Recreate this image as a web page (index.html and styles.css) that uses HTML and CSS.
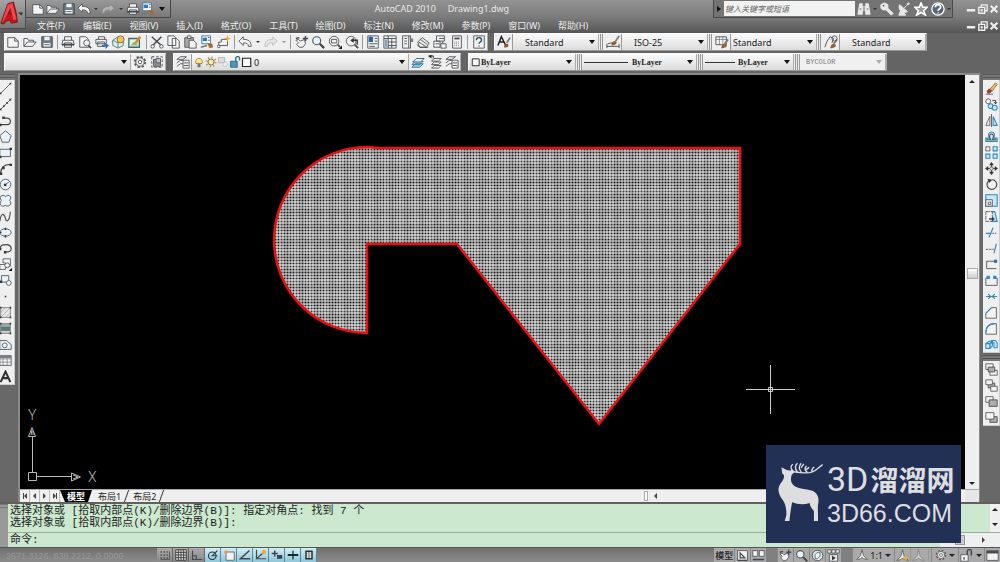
FILE: index.html
```html
<!DOCTYPE html>
<html lang="zh-CN">
<head>
<meta charset="utf-8">
<title>AutoCAD 2010 Drawing1.dwg</title>
<link rel="stylesheet" href="styles.css">
</head>
<body>
<svg class="sprite" aria-hidden="true">
  <symbol id="new" viewBox="0 0 16 16"><path class="p" d="M2 3h8l4 4v7H2z"/><path class="s" d="M10 3v4h4"/></symbol>
  <symbol id="open" viewBox="0 0 16 16"><path class="p" d="M1 13V4h4l1 2h6v2"/><path class="p" d="M1 13l4-5h10l-4 5z"/></symbol>
  <symbol id="save" viewBox="0 0 16 16"><path d="M2 2h12v12H2z" fill="#6d7987" stroke="#3e454e"/><path d="M5 2h6v4H5zM4 9h8v4H4z" fill="#f2f2f2"/><path d="M5 11h6" stroke="#555"/></symbol>
  <symbol id="undo" viewBox="0 0 16 16"><path class="p" d="M1 7l5-5v3c6 0 9 2 9 8h-3c0-3-2-4-6-4v3z"/></symbol>
  <symbol id="redo" viewBox="0 0 16 16"><path d="M15 7l-5-5v3c-6 0-9 2-9 8h3c0-3 2-4 6-4v3z" fill="#ddd" stroke="#888"/></symbol>
  <symbol id="print" viewBox="0 0 16 16"><path class="p" d="M4 6V2h8v4M2 6h12l1 5H1zM4 9h8v5H4z"/><path class="s" d="M1 11h14" stroke-width="2"/></symbol>
  <symbol id="preview" viewBox="0 0 16 16"><path class="p" d="M2 2h7l3 3v9H2z"/><circle cx="10" cy="9" r="3.5" fill="#e7f1f6" stroke="#555"/><path class="s" d="M12 12l3 3" stroke-width="2"/></symbol>
  <symbol id="publish" viewBox="0 0 16 16"><path class="p" d="M4 5V2h7v3M1 5h12v5H1zM3 8h8v5H3z"/><path d="M8 11h4V9l4 3-4 4v-3H8z" fill="#2872b7"/></symbol>
  <symbol id="dwf" viewBox="0 0 16 16"><path d="M2 6l6-4 6 4v6l-6 3-6-3z" fill="#dff0e6" stroke="#477979"/><path d="M2 6l6 3 6-3M8 9v6" fill="none" stroke="#477979"/><circle cx="11" cy="5" r="4" fill="#f4c35a" stroke="#7b6936"/></symbol>
  <symbol id="markup" viewBox="0 0 16 16"><path d="M1 4h12v10H1z" fill="#dff3ef" stroke="#426864" stroke-width="1.5"/><path d="M3 12l3-4 3 2 4 2" fill="#8dbe95"/><path d="M8 10l6-8" stroke="#d48e2c" stroke-width="3"/></symbol>
  <symbol id="cut" viewBox="0 0 16 16"><path class="s" d="M2 2l11 10M13 2L3 12" stroke-width="1.7"/><circle class="p" cx="3" cy="13" r="2"/><circle class="p" cx="13" cy="13" r="2"/></symbol>
  <symbol id="copy" viewBox="0 0 16 16"><path class="p" d="M1 1h7l2 2v9H1zM6 4h5l3 3v8H6z"/></symbol>
  <symbol id="paste" viewBox="0 0 16 16"><path d="M2 3h10v11H2z" fill="#aaa" stroke="#555"/><path class="p" d="M5 1h4v3H5zM7 6h5l3 3v6H7z"/></symbol>
  <symbol id="match" viewBox="0 0 16 16"><path d="M2 1h10v9H2z" fill="#f8fbff" stroke="#4471a0"/><path d="M3 3h5v4H3z" fill="#347ab8"/><path d="M9 3h2M9 6h2" stroke="#456"/><path d="M8 9l6 1 1 4-4 1z" fill="#a86735"/><path d="M1 14l7-2" stroke="#777" stroke-width="2"/></symbol>
  <symbol id="block" viewBox="0 0 16 16"><path class="p" d="M5 5h7v7H2V8h3z"/><circle class="p" cx="2" cy="13" r="1.5"/><path d="M12 0l1 3 3 1-3 1-1 3-1-3-3-1 3-1z" fill="#efaa35"/></symbol>
  <symbol id="pan" viewBox="0 0 16 16"><path class="p" d="M1 6l3-1 2 2 5-2 1 5-3 4H5l-3-3 2-2z"/><path class="s" d="M1 4l4-1M12 1v6M9 4h6" stroke-width="1.6"/></symbol>
  <symbol id="zoom" viewBox="0 0 16 16"><circle cx="6.500" cy="6.500" r="4.500" fill="#e5f4ff" stroke="#555" stroke-width="1.300"/><path d="M10 10l5 5" stroke="#444" stroke-width="2.500"/></symbol>
  <symbol id="zoomwin" viewBox="0 0 16 16"><circle class="p" cx="7" cy="7" r="5.500"/><path class="p" d="M4 5h6v4H4z"/><path class="s" d="M11 11l3 3" stroke-width="2"/><path d="M12 16h4v-4z" fill="#222"/></symbol>
  <symbol id="zoomprev" viewBox="0 0 16 16"><circle class="p" cx="7" cy="7" r="5.500"/><path class="s" d="M11 11l4 4" stroke-width="2"/><path d="M9 6h5v5" fill="none" stroke="#333" stroke-width="1.500"/><path d="M6 6l4-3v6z" fill="#333"/></symbol>
  <symbol id="props" viewBox="0 0 16 16"><path class="p" d="M2 1h12v14H2z"/><path d="M3 2h5v6H3z" fill="#2b62a0"/><path class="s" d="M10 4h3M10 7h3M4 10h9M4 13h6"/></symbol>
  <symbol id="dcenter" viewBox="0 0 16 16"><path class="p" d="M1 1h14v14H1z"/><path class="s" d="M1 4h14M6 1v14M10 4v11M6 8h9M6 12h9"/><path d="M2 5h3v9H2z" fill="#81a2bd"/></symbol>
  <symbol id="palette" viewBox="0 0 16 16"><path class="p" d="M3 1h9v14H3z"/><path class="s" d="M5 4h3M5 7h3M5 10h3M10 1v14"/><path d="M12 4h3v4h-3z" fill="#777"/></symbol>
  <symbol id="sheets" viewBox="0 0 16 16"><path class="p" d="M2 8l5-5 8 6-3 5H4z"/><path class="s" d="M1 11l4 3h9M5 5l8 6M3 8l8 5"/></symbol>
  <symbol id="marks" viewBox="0 0 16 16"><path class="p" d="M4 1h9v6H4zM1 7h7v7H1zM9 10h6v5H9z"/><path class="s" d="M3 10h4M7 4h6M11 7v3"/></symbol>
  <symbol id="calc" viewBox="0 0 16 16"><path class="p" d="M3 1h10v14H3z"/><path class="s" d="M5 4h6" stroke-width="2"/><path d="M5 8h6M5 10h6M5 12h6" stroke="#777" stroke-dasharray="1 1"/></symbol>
  <symbol id="help" viewBox="0 0 16 16"><path class="p" d="M2 1h12v14H2z"/><path d="M5 6c0-4 6-4 6 0 0 2-3 2-3 4M8 12v1" fill="none" stroke="#245" stroke-width="1.500"/></symbol>
  <symbol id="tstyle" viewBox="0 0 16 16"><path d="M1 12L5 2l5 10M3 8h5" fill="none" stroke="#222" stroke-width="1.800"/><path d="M15 3l-4 6" stroke="#777" stroke-width="2"/><path d="M8 14c0-4 4-5 5-3s-2 4-5 3z" fill="#8b5a31"/></symbol>
  <symbol id="dstyle" viewBox="0 0 16 16"><path class="s" d="M1 10v5M15 10v5M1 13h14M2 10l9-2"/><path d="M15 1l-4 6" stroke="#777" stroke-width="2"/><path d="M6 12c1-6 5-6 6-4s-2 4-6 4z" fill="#975f33"/></symbol>
  <symbol id="tbstyle" viewBox="0 0 16 16"><path class="p" d="M1 2h12v9H1z"/><path class="s" d="M1 5h12M5 2v9M9 2v9" opacity=".6"/><path d="M15 5l-4 5" stroke="#777" stroke-width="2"/><path d="M7 15c1-5 4-6 6-4s-2 4-6 4z" fill="#975f33"/></symbol>
  <symbol id="mlstyle" viewBox="0 0 16 16"><path class="s" d="M1 14l2-6 4-6 4 2-2 5"/><path d="M15 5l-4 5" stroke="#777" stroke-width="2"/><path d="M7 15c1-5 4-6 6-4s-2 4-6 4z" fill="#975f33"/><circle cx="12" cy="4" r="3" fill="none" stroke="#555"/></symbol>
  <symbol id="gear" viewBox="0 0 16 16"><circle cx="8" cy="8" r="6" fill="#ddd" stroke="#555" stroke-width="2" stroke-dasharray="2.600 2.100"/><circle cx="8" cy="8" r="4.800" fill="#eee" stroke="#555"/><circle cx="8" cy="8" r="2" fill="#fff" stroke="#555"/></symbol>
  <symbol id="frame" viewBox="0 0 16 16"><path class="s" d="M2 2h12v12H2z" stroke-dasharray="3 2"/><path d="M4 5h8v8H4z" fill="#8a9098" stroke="#555"/><path d="M7 4h5v5H7z" fill="#bcc2c8" stroke="#555"/></symbol>
  <symbol id="layers" viewBox="0 0 16 16"><path class="p" d="M1 5l4-3h7l-4 3zM1 9l4-3h4M1 13l4-3h3"/><path class="p" d="M8 6h7v9H8z"/><path class="s" d="M9 9h5M9 12h5"/></symbol>
  <symbol id="bluelayers" viewBox="0 0 16 16"><path d="M1 14l4-4h9l-4 4zM1 11l4-4h9l-4 4z" fill="#9bd1ed" stroke="#34759b"/><path d="M2 8l4-4h9l-4 4z" fill="#dff1fa" stroke="#34556b"/></symbol>
  <symbol id="layerprev" viewBox="0 0 16 16"><path class="p" d="M7 4h8l-3 3H4zM7 8h8l-3 3H4zM7 12h8l-3 3H4z"/><path d="M1 1h5v3" fill="none" stroke="#222"/><path d="M0 1l4-1v4z" fill="#222"/></symbol>
  <symbol id="bulb" viewBox="0 0 16 16"><path d="M4 10C1 1 15 1 12 10H4z" fill="#ffe784" stroke="#8b7431"/><path d="M6 10h4v5H6z" fill="#777"/></symbol>
  <symbol id="sun" viewBox="0 0 16 16"><circle cx="8" cy="8" r="6" fill="none" stroke="#b89a4e" stroke-width="3" stroke-dasharray="1.700 3"/><circle cx="8" cy="8" r="4" fill="#f8e8a0" stroke="#655b3c"/></symbol>
  <symbol id="freeze" viewBox="0 0 16 16"><path d="M2 2h8v7H2z" fill="#ddd" stroke="#aaa"/><circle cx="11" cy="11" r="3" fill="#eee" stroke="#aaa" stroke-dasharray="2 1"/></symbol>
  <symbol id="unlock" viewBox="0 0 16 16"><path d="M2 7h9v8H2z" fill="#4998bd" stroke="#25546c"/><path d="M9 7V3c0-3 5-3 5 0v3" fill="none" stroke="#35718c" stroke-width="1.800"/></symbol>
  <symbol id="lockgray" viewBox="0 0 16 16"><path class="p" d="M1 7h9v8H1z"/><path class="s" d="M9 7V3c0-3 5-3 5 0v5M5 10v3" stroke-width="1.800"/></symbol>
  <symbol id="box" viewBox="0 0 16 16"><path d="M2 3h11v11H2z" fill="#fff" stroke="#222" stroke-width="1.500"/></symbol>
  <symbol id="line" viewBox="0 0 16 16"><path class="s" d="M2 14L14 2"/><path class="d" d="M1 13h2v2H1zM13 1h2v2h-2z"/></symbol>
  <symbol id="xline" viewBox="0 0 16 16"><path class="s" d="M1 15L15 1"/><path class="d" d="M1 12v3h3zM12 1h3v3zM5 9h2v2H5zM9 5h2v2H9z"/></symbol>
  <symbol id="pline" viewBox="0 0 16 16"><path class="s" d="M1 13h9c6 0 5-8 0-8H5" stroke-width="1.500"/><path class="d" d="M0 12h3v3H0zM4 3h3v3H4z"/></symbol>
  <symbol id="polygon" viewBox="0 0 16 16"><path class="b" d="M8 1l7 6-3 8H4L1 7z"/></symbol>
  <symbol id="rect" viewBox="0 0 16 16"><path class="b" d="M1 4h13v9H1z"/><path class="d" d="M0 12h3v3H0zM13 2h3v3h-3z"/></symbol>
  <symbol id="arc" viewBox="0 0 16 16"><path class="s" d="M2 15C2 7 6 3 14 3" stroke-width="1.500"/><path class="d" d="M1 13h3v3H1zM4 6h3v3H4zM13 2h3v3h-3z"/></symbol>
  <symbol id="circle" viewBox="0 0 16 16"><circle class="b" cx="8" cy="8" r="6.500"/><path class="s" d="M7 9l5-4"/><path class="d" d="M6 7h3v3H6z"/></symbol>
  <symbol id="cloud" viewBox="0 0 16 16"><path class="b" d="M3 8C-1 3 4 0 8 3c4-3 9 0 5 5 4 4-1 9-5 6-5 3-9-2-5-6z"/></symbol>
  <symbol id="spline" viewBox="0 0 16 16"><path class="s" d="M1 14C3 0 7 6 8 11s5 3 6-9" stroke-width="1.300"/></symbol>
  <symbol id="ellipse" viewBox="0 0 16 16"><ellipse class="b" cx="8" cy="8" rx="7" ry="4.500"/><path class="d" d="M7 2h2v3H7zM0 7h3v2H0zM7 11h2v3H7z"/></symbol>
  <symbol id="earc" viewBox="0 0 16 16"><path class="s" d="M1 8c1-7 14-6 14 0 0 3-2 5-7 4" stroke-width="1.500"/><path class="d" d="M0 7h3v3H0zM6 11h3v3H6z"/></symbol>
  <symbol id="insert" viewBox="0 0 16 16"><path class="p" d="M5 1h9v9H8V6H5zM1 8h7v6H1z"/><circle class="p" cx="10" cy="9" r="3"/><path d="M12 16h4v-4z" fill="#111"/></symbol>
  <symbol id="mkblock" viewBox="0 0 16 16"><path class="b" d="M3 2h9v8H3z"/><circle class="p" cx="12" cy="11" r="3"/><path class="d" d="M0 8h4v3H0z"/></symbol>
  <symbol id="point" viewBox="0 0 16 16"><path class="d" d="M7 7h2v2H7z"/></symbol>
  <symbol id="hatch" viewBox="0 0 16 16"><path d="M2 2h12v12H2z" fill="#e6e6e6" stroke="#777"/><path d="M2 8l6-6M2 14L14 2M8 14l6-6" stroke="#aaa"/><path class="d" d="M1 1h2v2H1zM13 1h2v2h-2zM1 13h2v2H1zM13 13h2v2h-2z"/></symbol>
  <symbol id="gradient" viewBox="0 0 16 16"><path d="M2 2h12v5H2z" fill="#9aa6a6"/><path d="M2 6h12v5H2z" fill="#567b76"/><path d="M2 11h12v3H2z" fill="#ccc"/><path d="M2 2h12v12H2z" fill="none" stroke="#777"/><path class="d" d="M1 1h2v2H1zM13 1h2v2h-2zM1 13h2v2H1zM13 13h2v2h-2z"/></symbol>
  <symbol id="region" viewBox="0 0 16 16"><path class="b" d="M1 3h8l6 5v6H1z"/><circle class="p" cx="7" cy="9" r="3"/></symbol>
  <symbol id="table" viewBox="0 0 16 16"><path class="p" d="M1 2h14v12H1z"/><path class="s" d="M1 6h14M1 10h14M5 4v10M10 4v10" opacity=".6"/><path d="M1 2h14v3H1z" fill="#77808d"/></symbol>
  <symbol id="mtext" viewBox="0 0 16 16"><path d="M2 15L8 2l6 13M4 10h8" fill="none" stroke="#333" stroke-width="2.500"/></symbol>
  <symbol id="erase" viewBox="0 0 16 16"><path d="M6 9l7-8 2 2-6 8z" fill="#e6c268" stroke="#85622d"/><path d="M2 11l3-3 4 3-3 3H3z" fill="#9b4137"/><path class="s" d="M1 15h9"/></symbol>
  <symbol id="copyobj" viewBox="0 0 16 16"><circle class="p" cx="4" cy="4" r="3"/><circle class="b2" cx="7" cy="10" r="3"/><circle class="b2" cx="12" cy="12" r="3"/><path d="M9 3h4v4M11 5l2 2 2-2" fill="none" stroke="#222"/></symbol>
  <symbol id="mirror" viewBox="0 0 16 16"><path class="p" d="M1 14h5V3z"/><path class="b2" d="M10 3v11h5z"/><path class="s" d="M8 0v16"/></symbol>
  <symbol id="offset" viewBox="0 0 16 16"><path class="b2" d="M1 14v-4h4C1 0 15 0 11 10h4v4z"/><path class="s" d="M2 12h5C5 9 5 5 8 5s3 4 1 7h5" stroke-width="1.300"/></symbol>
  <symbol id="array" viewBox="0 0 16 16"><path class="p" d="M1 1h5v5H1z"/><path class="b2" d="M10 1h5v5h-5zM1 10h5v5H1zM10 10h5v5h-5z"/></symbol>
  <symbol id="move" viewBox="0 0 16 16"><path class="s" d="M8 1v14M1 8h14" stroke-width="1.500"/><path class="d" d="M8 0l3 4H5zM8 16l3-4H5zM0 8l4-3v6zM16 8l-4-3v6z"/><circle class="p" cx="8" cy="8" r="2"/></symbol>
  <symbol id="rotate" viewBox="0 0 16 16"><path class="s" d="M4 4a6 6 0 1 0 5-2" stroke-width="1.400"/><path class="d" d="M3 1l6 1-4 4z"/></symbol>
  <symbol id="scale" viewBox="0 0 16 16"><path class="b2" d="M1 1h14v14H1z"/><path class="p" d="M1 7h8v8H1z"/><path class="p" d="M4 10h3v3H4z"/></symbol>
  <symbol id="stretch" viewBox="0 0 16 16"><path class="b2" d="M8 2h4l3 12H8z"/><path class="p" d="M1 2h8v12H1z" stroke-dasharray="5 1"/><path class="d" d="M5 10h4V8l3 3-3 3v-2H5z"/></symbol>
  <symbol id="trim" viewBox="0 0 16 16"><path class="c" d="M1 9h7M5 14l5-12"/><path class="s" d="M9 9h6" stroke-dasharray="2 1"/></symbol>
  <symbol id="extend" viewBox="0 0 16 16"><path class="c" d="M11 14l3-12"/><path class="s" d="M1 9h10" stroke-dasharray="3 1"/></symbol>
  <symbol id="breakpt" viewBox="0 0 16 16"><path class="s" d="M13 4H2v9h12"/><path d="M11 2h4v4h-4z" fill="#2e78a8"/></symbol>
  <symbol id="break" viewBox="0 0 16 16"><path class="s" d="M5 5H1v9h14V5h-4"/><path d="M2 2h4v4H2zM10 2h4v4h-4z" fill="#288bc8"/></symbol>
  <symbol id="join" viewBox="0 0 16 16"><path class="c" d="M1 8h14M4 5l3 3-3 3M12 5L9 8l3 3"/></symbol>
  <symbol id="chamfer" viewBox="0 0 16 16"><path class="p" d="M1 15V9l7-7h6v13z"/><path class="c" d="M1 9l7-7"/></symbol>
  <symbol id="fillet" viewBox="0 0 16 16"><path class="p" d="M1 15C1 6 5 2 14 2v13z"/><path class="c" d="M1 13C1 6 5 2 12 2"/></symbol>
  <symbol id="explode" viewBox="0 0 16 16"><path class="b2" d="M1 7l4-3h4v6l-3 3H1zM8 3h5l2 3v6h-4V6H8z"/><path class="c" d="M1 7h5v6M6 7l3-3"/></symbol>
  <symbol id="front" viewBox="0 0 16 16"><path class="p" d="M1 1h9v7H1zM6 9h9v6H6z"/><path d="M4 5h8v6H4z" fill="#a9adb2" stroke="#444"/></symbol>
  <symbol id="back" viewBox="0 0 16 16"><path d="M4 5h8v6H4z" fill="#a9adb2" stroke="#444"/><path class="p" d="M1 1h8v6H1zM7 9h8v6H7z"/></symbol>
  <symbol id="above" viewBox="0 0 16 16"><path class="p" d="M1 2h9v7H1z"/><path d="M5 6h10v8H5z" fill="#a9adb2" stroke="#444"/></symbol>
  <symbol id="under" viewBox="0 0 16 16"><path d="M6 7h9v7H6z" fill="#a9adb2" stroke="#444"/><path class="p" d="M1 2h10v8H1z"/></symbol>
  <symbol id="binoc" viewBox="0 0 16 16"><path class="w" d="M3 2h3v3h4V2h3l2 12h-5v-4H6v4H1z"/><path d="M8 5v5M3 8h2M11 8h2" stroke="#555"/></symbol>
  <symbol id="key" viewBox="0 0 16 16"><path class="w" d="M1 3l4-2 4 2v4l6 6-2 2-6-6H3L1 7z"/><circle cx="4" cy="4" r="1" fill="#555"/></symbol>
  <symbol id="dish" viewBox="0 0 16 16"><path class="w" d="M3 3l9 8c-2 1-4 1-5 0l3 4H2l2-5c-2-2-2-5-1-7zM8 7l5-5"/><circle class="w" cx="13" cy="2" r="1"/></symbol>
  <symbol id="star" viewBox="0 0 16 16"><path d="M8 1l2 5h5l-4 4 2 5-5-3-5 3 2-5-4-4h5z" fill="#999" stroke="#fff" stroke-width="1.800"/></symbol>
  <symbol id="helpw" viewBox="0 0 16 16"><circle cx="8" cy="8" r="7" fill="#567" stroke="#fff" stroke-width="1.500"/><path d="M5 6c0-4 6-4 6 0 0 2-3 2-3 4M8 12v1" fill="none" stroke="#fff" stroke-width="2"/></symbol>
  <symbol id="min" viewBox="0 0 12 12"><path d="M1 6h10v3H1z" fill="#eee"/></symbol>
  <symbol id="restore" viewBox="0 0 12 12"><path d="M4 4V1h7v7H8M1 4h7v7H1zM4 7h1v1H4z" fill="none" stroke="#eee" stroke-width="1.700"/></symbol>
  <symbol id="close" viewBox="0 0 12 12"><path d="M2 2l8 8M10 2l-8 8" stroke="#eee" stroke-width="2.600"/></symbol>
  <symbol id="snap" viewBox="0 0 16 16"><path d="M2 4h10M2 8h10M2 12h10" stroke="#333" stroke-dasharray="2 2" stroke-width="1.500"/><path class="s" d="M14 3v11H2"/></symbol>
  <symbol id="grid" viewBox="0 0 16 16"><path d="M1 1h14v14H1zM4.500 1v14M8 1v14M11.500 1v14M1 4.500h14M1 8h14M1 11.500h14" fill="#ddd" stroke="#222"/></symbol>
  <symbol id="ortho" viewBox="0 0 16 16"><path class="s" d="M2 2v12h13M2 9h5v5" stroke-width="1.500"/></symbol>
  <symbol id="polar" viewBox="0 0 16 16"><circle cx="7" cy="9" r="5" fill="none" stroke="#234" stroke-width="1.500"/><path class="s" d="M14 2L7 9h7" stroke-width="1.500"/></symbol>
  <symbol id="osnap" viewBox="0 0 16 16"><path class="p" d="M4 4h11v11H4z"/><circle cx="4" cy="4" r="2.500" fill="#ec9c55"/></symbol>
  <symbol id="track" viewBox="0 0 16 16"><path class="s" d="M14 2L2 13h13" stroke-width="2"/></symbol>
  <symbol id="ducs" viewBox="0 0 16 16"><path class="s" d="M2 1v12h13M2 13L11 5" stroke-width="1.500"/><circle cx="12" cy="4" r="3" fill="#efaa45"/></symbol>
  <symbol id="dyn" viewBox="0 0 16 16"><path class="s" d="M5 2v8M1 6h8" stroke-width="2"/><path d="M8 8h7v5H8z" fill="#345"/></symbol>
  <symbol id="lwt" viewBox="0 0 16 16"><path d="M1 8h14" stroke="#122" stroke-width="2.500"/><path d="M8 2v12" stroke="#122" stroke-width="1.500"/></symbol>
  <symbol id="qp" viewBox="0 0 16 16"><path d="M4 3h8v10H4z" fill="#ddd" stroke="#233" stroke-width="2"/><path class="s" d="M8 3v10"/></symbol>
  <symbol id="layout" viewBox="0 0 16 16"><path class="p" d="M2 2h12v12H2z"/><path class="s" d="M5 5v6h6zM2 14h12" stroke-width="1.500"/></symbol>
  <symbol id="views" viewBox="0 0 16 16"><path class="p" d="M1 2h6v7H1zM9 2h6v7H9z"/><path class="s" d="M1 13h14" stroke-width="2"/></symbol>
  <symbol id="wheel" viewBox="0 0 16 16"><circle cx="8" cy="8" r="6.500" fill="#d9edf6" stroke="#444"/><path class="p" d="M5 7l3-3h3v5l-3 3H5z"/></symbol>
  <symbol id="motion" viewBox="0 0 16 16"><path class="p" d="M1 1h4v4H1zM6 1h4v4H6zM11 1h4v4h-4zM3 7h10v8H3z"/><path class="d" d="M6 8l5 3-5 3z"/></symbol>
  <symbol id="anno" viewBox="0 0 16 16"><path class="p" d="M6 9L8 1l2 8 5 5-5-1-2-2-2 2-5 1z"/></symbol>
  <symbol id="annov" viewBox="0 0 16 16"><path class="p" d="M6 9L8 1l2 8 5 5-5-1-2-2-2 2-5 1z"/><path d="M12 7l1 2 3 1-3 2-1 3-2-3-2-2 3-1z" fill="#f0ad38"/></symbol>
  <symbol id="screen" viewBox="0 0 16 16"><path class="p" d="M1 2h14v12H1z"/><path class="s" d="M1 4h14" stroke-width="3"/></symbol>
</svg>

<header class="header">
  <button class="app-logo" aria-label="应用程序菜单">
    <svg viewBox="0 0 26 29"><path d="M1 24L8 4l6-2 3 12 1 9-6 1-2-3-4 1-2 3z" fill="#c7141b" stroke="#70191c"/><path d="M8 5l5-2 4 17-3 1-3-13-8 15H2z" fill="#f0494d"/><path d="M8 15l2-5 2 5z" fill="#6b2023"/><path d="M19 13h5l-2 3z" fill="#333"/></svg>
  </button>
  <div class="title-row">
    <div class="quick">
      <button class="tool" aria-label="新建"><svg><use href="#new"/></svg></button>
      <button class="tool" aria-label="打开"><svg><use href="#open"/></svg></button>
      <button class="tool" aria-label="保存"><svg><use href="#save"/></svg></button>
      <button class="tool" aria-label="放弃"><svg><use href="#undo"/></svg></button>
      <button class="drop" aria-label="放弃列表"></button>
      <button class="tool dim" aria-label="重做"><svg><use href="#redo"/></svg></button>
      <button class="drop" aria-label="重做列表"></button>
      <button class="tool" aria-label="打印"><svg><use href="#print"/></svg></button>
      <button class="tool" aria-label="特性匹配"><svg><use href="#match"/></svg></button>
      <button class="drop big" aria-label="自定义"></button>
    </div>
    <h1 class="title"><span>AutoCAD 2010</span><span>Drawing1.dwg</span></h1>
    <div class="search">
      <button class="expand" aria-label="折叠"></button>
      <input type="text" aria-label="搜索" placeholder="键入关键字或短语">
      <button class="tool" aria-label="查找"><svg><use href="#binoc"/></svg></button>
      <button class="drop" aria-label="查找选项"></button>
      <button class="tool" aria-label="速博"><svg><use href="#key"/></svg></button>
      <button class="tool" aria-label="通讯中心"><svg><use href="#dish"/></svg></button>
      <button class="tool" aria-label="收藏夹"><svg><use href="#star"/></svg></button>
      <button class="tool" aria-label="帮助"><svg><use href="#helpw"/></svg></button>
      <button class="drop" aria-label="帮助选项"></button>
    </div>
    <div class="win">
      <button aria-label="最小化"><svg><use href="#min"/></svg></button>
      <button aria-label="还原"><svg><use href="#restore"/></svg></button>
      <button aria-label="关闭"><svg><use href="#close"/></svg></button>
    </div>
  </div>
  <div class="menu-row">
    <nav class="menu">
      <button>文件(F)</button><button>编辑(E)</button><button>视图(V)</button><button>插入(I)</button><button>格式(O)</button><button>工具(T)</button><button>绘图(D)</button><button>标注(N)</button><button>修改(M)</button><button>参数(P)</button><button>窗口(W)</button><button>帮助(H)</button>
    </nav>
    <div class="win">
      <button aria-label="最小化图形"><svg><use href="#min"/></svg></button>
      <button aria-label="还原图形"><svg><use href="#restore"/></svg></button>
      <button aria-label="关闭图形"><svg><use href="#close"/></svg></button>
    </div>
  </div>
</header>

<section class="bars">
  <div class="bar-row">
    <div class="panel standard">
      <button class="tool" aria-label="新建"><svg><use href="#new"/></svg></button>
      <button class="tool" aria-label="打开"><svg><use href="#open"/></svg></button>
      <button class="tool" aria-label="保存"><svg><use href="#save"/></svg></button>
      <i class="sep"></i>
      <button class="tool" aria-label="打印"><svg><use href="#print"/></svg></button>
      <button class="tool" aria-label="打印预览"><svg><use href="#preview"/></svg></button>
      <button class="tool" aria-label="发布"><svg><use href="#publish"/></svg></button>
      <button class="tool" aria-label="三维 DWF"><svg><use href="#dwf"/></svg></button>
      <button class="tool" aria-label="标记"><svg><use href="#markup"/></svg></button>
      <i class="sep"></i>
      <button class="tool" aria-label="剪切"><svg><use href="#cut"/></svg></button>
      <button class="tool" aria-label="复制"><svg><use href="#copy"/></svg></button>
      <button class="tool" aria-label="粘贴"><svg><use href="#paste"/></svg></button>
      <button class="tool" aria-label="特性匹配"><svg><use href="#match"/></svg></button>
      <button class="tool" aria-label="块编辑器"><svg><use href="#block"/></svg></button>
      <i class="sep"></i>
      <button class="tool" aria-label="放弃"><svg><use href="#undo"/></svg></button>
      <button class="drop" aria-label="放弃列表"></button>
      <button class="tool dim" aria-label="重做"><svg><use href="#redo"/></svg></button>
      <button class="drop dim" aria-label="重做列表"></button>
      <i class="sep"></i>
      <button class="tool" aria-label="平移"><svg><use href="#pan"/></svg></button>
      <button class="tool" aria-label="缩放"><svg><use href="#zoom"/></svg></button>
      <button class="tool" aria-label="窗口缩放"><svg><use href="#zoomwin"/></svg></button>
      <button class="tool" aria-label="上一个"><svg><use href="#zoomprev"/></svg></button>
      <i class="sep"></i>
      <button class="tool" aria-label="特性"><svg><use href="#props"/></svg></button>
      <button class="tool" aria-label="设计中心"><svg><use href="#dcenter"/></svg></button>
      <button class="tool" aria-label="工具选项板"><svg><use href="#palette"/></svg></button>
      <button class="tool" aria-label="图纸集"><svg><use href="#sheets"/></svg></button>
      <button class="tool" aria-label="标记集"><svg><use href="#marks"/></svg></button>
      <button class="tool" aria-label="计算器"><svg><use href="#calc"/></svg></button>
      <i class="sep"></i>
      <button class="tool" aria-label="帮助"><svg><use href="#help"/></svg></button>
    </div>
    <div class="panel styles">
      <button class="tool" aria-label="文字样式"><svg><use href="#tstyle"/></svg></button>
      <span class="combo style"><select aria-label="文字样式列表"><option>Standard</option></select></span>
      <i class="grip"></i>
      <button class="tool" aria-label="标注样式"><svg><use href="#dstyle"/></svg></button>
      <span class="combo style"><select aria-label="标注样式列表"><option>ISO-25</option></select></span>
      <i class="grip"></i>
      <button class="tool" aria-label="表格样式"><svg><use href="#tbstyle"/></svg></button>
      <span class="combo style flush"><select aria-label="表格样式列表"><option>Standard</option></select></span>
      <i class="grip"></i>
      <button class="tool" aria-label="多重引线样式"><svg><use href="#mlstyle"/></svg></button>
      <span class="combo style"><select aria-label="多重引线样式列表"><option>Standard</option></select></span>
    </div>
  </div>
  <div class="bar-row second">
    <div class="panel">
      <span class="combo workspace"><select aria-label="工作空间"><option></option></select></span>
      <button class="tool" aria-label="工作空间设置"><svg><use href="#gear"/></svg></button>
      <button class="tool" aria-label="我的工作空间"><svg><use href="#frame"/></svg></button>
    </div>
    <div class="panel layerbar">
      <button class="tool" aria-label="图层特性"><svg><use href="#layers"/></svg></button>
      <span class="combo layer">
        <span class="lead"><svg><use href="#bulb"/></svg><svg><use href="#sun"/></svg><svg><use href="#freeze"/></svg><svg><use href="#unlock"/></svg><svg><use href="#box"/></svg></span>
        <select aria-label="图层"><option>0</option></select>
      </span>
      <button class="tool" aria-label="置为当前"><svg><use href="#bluelayers"/></svg></button>
      <button class="tool" aria-label="上一个图层"><svg><use href="#layerprev"/></svg></button>
      <button class="tool" aria-label="图层状态"><svg><use href="#layers"/></svg></button>
    </div>
    <div class="panel propbar">
      <span class="combo color"><span class="lead"><svg><use href="#box"/></svg></span><select aria-label="颜色"><option>ByLayer</option></select></span>
      <i class="grip"></i>
      <span class="combo ltype"><span class="lead"><i class="stroke"></i></span><select aria-label="线型"><option>ByLayer</option></select></span>
      <i class="grip"></i>
      <span class="combo lweight"><span class="lead"><i class="stroke"></i></span><select aria-label="线宽"><option>ByLayer</option></select></span>
      <i class="grip"></i>
      <span class="combo plot"><select aria-label="打印样式" disabled><option>BYCOLOR</option></select></span>
    </div>
  </div>
</section>

<main class="work">
  <aside class="side left">
    <i class="handle"></i>
    <div class="strip">
      <button class="tool" aria-label="直线"><svg><use href="#line"/></svg></button>
      <button class="tool" aria-label="构造线"><svg><use href="#xline"/></svg></button>
      <button class="tool" aria-label="多段线"><svg><use href="#pline"/></svg></button>
      <button class="tool" aria-label="正多边形"><svg><use href="#polygon"/></svg></button>
      <button class="tool" aria-label="矩形"><svg><use href="#rect"/></svg></button>
      <button class="tool" aria-label="圆弧"><svg><use href="#arc"/></svg></button>
      <button class="tool" aria-label="圆"><svg><use href="#circle"/></svg></button>
      <button class="tool" aria-label="修订云线"><svg><use href="#cloud"/></svg></button>
      <button class="tool" aria-label="样条曲线"><svg><use href="#spline"/></svg></button>
      <button class="tool" aria-label="椭圆"><svg><use href="#ellipse"/></svg></button>
      <button class="tool" aria-label="椭圆弧"><svg><use href="#earc"/></svg></button>
      <button class="tool" aria-label="插入块"><svg><use href="#insert"/></svg></button>
      <button class="tool" aria-label="创建块"><svg><use href="#mkblock"/></svg></button>
      <button class="tool" aria-label="点"><svg><use href="#point"/></svg></button>
      <button class="tool" aria-label="图案填充"><svg><use href="#hatch"/></svg></button>
      <button class="tool" aria-label="渐变色"><svg><use href="#gradient"/></svg></button>
      <button class="tool" aria-label="面域"><svg><use href="#region"/></svg></button>
      <button class="tool" aria-label="表格"><svg><use href="#table"/></svg></button>
      <button class="tool" aria-label="多行文字"><svg><use href="#mtext"/></svg></button>
    </div>
  </aside>

  <section class="doc">
    <div class="canvas">
      <svg class="drawing" viewBox="20 75 945 415" preserveAspectRatio="xMinYMin meet" role="img" aria-label="图形">
        <defs>
          <pattern id="net" width="3" height="3" patternUnits="userSpaceOnUse"><path d="M0 0h3v3H0z" fill="#c2c2c2"/><path d="M2 0h1v2H2z" fill="#8c8c8c"/><path d="M0 2h2v1H0z" fill="#808080"/><path d="M2 2h1v1H2z" fill="#1c1c1c"/></pattern>
          <pattern id="bands" width="15" height="15" patternUnits="userSpaceOnUse"><path d="M0 0h4v15H0zM0 0h15v4H0z" fill="#000" opacity=".1"/><path d="M9 0h3v15H9zM0 9h15v3H0z" fill="#fff" opacity=".14"/></pattern>
          <path id="outline" d="M740 148H380L367 147A93 93 0 0 0 367 333V244H457L599 424L740 244Z"/>
        </defs>
        <use href="#outline" fill="url(#net)"/>
        <use href="#outline" fill="url(#bands)" stroke="#ea0f12" stroke-width="2.500"/>
        <path d="M746 389.500h49M770.500 365v49" stroke="#ccc"/>
        <path d="M768.500 387.500h4v4h-4z" fill="none" stroke="#ccc"/>
        <g fill="none" stroke="#bbb"><path d="M28.500 472.500h8v8h-8zM32.500 472V437M37 476.500h34"/><path d="M28.500 436.500h7l-3.500-9zM71.500 473v8l9-4z"/><path d="M31 435l1-5M33 435v-4M73 475l5 2M73 479l5-2"/></g>
        <text class="ucs" x="28" y="420">Y</text>
        <text class="ucs" x="88" y="482">X</text>
      </svg>
    </div>
    <div class="vscroll"><button class="arr up" aria-label="向上"></button><i class="thumb"></i><button class="arr down" aria-label="向下"></button></div>
    <div class="tabs">
      <div class="tabnav"><button aria-label="第一个"><i class="bar"></i><i class="tri l"></i></button><button aria-label="上一个"><i class="tri l"></i></button><button aria-label="下一个"><i class="tri r"></i></button><button aria-label="最后一个"><i class="tri r"></i><i class="bar"></i></button></div>
      <button class="tab active">模型</button><button class="tab">布局1</button><button class="tab">布局2</button>
      <div class="hscroll"><i class="thumb"></i><i class="tri l"></i></div>
    </div>
    <div class="corner"></div>
  </section>

  <aside class="side right">
    <i class="handle"></i>
    <div class="strip">
      <button class="tool" aria-label="删除"><svg><use href="#erase"/></svg></button>
      <button class="tool" aria-label="复制"><svg><use href="#copyobj"/></svg></button>
      <button class="tool" aria-label="镜像"><svg><use href="#mirror"/></svg></button>
      <button class="tool" aria-label="偏移"><svg><use href="#offset"/></svg></button>
      <button class="tool" aria-label="阵列"><svg><use href="#array"/></svg></button>
      <button class="tool" aria-label="移动"><svg><use href="#move"/></svg></button>
      <button class="tool" aria-label="旋转"><svg><use href="#rotate"/></svg></button>
      <button class="tool" aria-label="缩放"><svg><use href="#scale"/></svg></button>
      <button class="tool" aria-label="拉伸"><svg><use href="#stretch"/></svg></button>
      <button class="tool" aria-label="修剪"><svg><use href="#trim"/></svg></button>
      <button class="tool" aria-label="延伸"><svg><use href="#extend"/></svg></button>
      <button class="tool" aria-label="打断于点"><svg><use href="#breakpt"/></svg></button>
      <button class="tool" aria-label="打断"><svg><use href="#break"/></svg></button>
      <button class="tool" aria-label="合并"><svg><use href="#join"/></svg></button>
      <button class="tool" aria-label="倒角"><svg><use href="#chamfer"/></svg></button>
      <button class="tool" aria-label="圆角"><svg><use href="#fillet"/></svg></button>
      <button class="tool" aria-label="分解"><svg><use href="#explode"/></svg></button>
    </div>
    <i class="handle"></i>
    <div class="strip">
      <button class="tool" aria-label="前置"><svg><use href="#front"/></svg></button>
      <button class="tool" aria-label="后置"><svg><use href="#back"/></svg></button>
      <button class="tool" aria-label="置于对象之上"><svg><use href="#above"/></svg></button>
      <button class="tool" aria-label="置于对象之下"><svg><use href="#under"/></svg></button>
    </div>
  </aside>
</main>

<section class="command">
  <i class="cmd-grip"></i>
  <div class="cmd-body">
    <div class="history">
      <div class="log"><p>选择对象或 [拾取内部点(K)/删除边界(B)]: 指定对角点: 找到 7 个</p><p>选择对象或 [拾取内部点(K)/删除边界(B)]:</p></div>
      <div class="cmd-scroll"><i class="tri u"></i><i class="tri d"></i></div>
    </div>
    <div class="prompt"><label for="cmd">命令:</label><input id="cmd" type="text"><div class="cmd-h"><i class="thumb"></i><i class="tri r"></i></div></div>
  </div>
</section>

<footer class="status">
  <output class="coords">2671.3126, 838.2212, 0.0000</output>
  <div class="modes">
    <button class="tool" aria-label="捕捉"><svg><use href="#snap"/></svg></button>
    <button class="tool" aria-label="栅格"><svg><use href="#grid"/></svg></button>
    <button class="tool" aria-label="正交"><svg><use href="#ortho"/></svg></button>
    <button class="tool on" aria-label="极轴"><svg><use href="#polar"/></svg></button>
    <button class="tool on" aria-label="对象捕捉"><svg><use href="#osnap"/></svg></button>
    <button class="tool on" aria-label="对象追踪"><svg><use href="#track"/></svg></button>
    <button class="tool on" aria-label="DUCS"><svg><use href="#ducs"/></svg></button>
    <button class="tool on" aria-label="DYN"><svg><use href="#dyn"/></svg></button>
    <button class="tool on" aria-label="线宽"><svg><use href="#lwt"/></svg></button>
    <button class="tool on" aria-label="QP"><svg><use href="#qp"/></svg></button>
  </div>
  <div class="tray">
    <button class="word">模型</button>
    <button class="tool" aria-label="快速查看布局"><svg><use href="#layout"/></svg></button>
    <button class="tool" aria-label="快速查看图形"><svg><use href="#views"/></svg></button>
    <i class="space"></i>
    <button class="tool" aria-label="平移"><svg><use href="#pan"/></svg></button>
    <button class="tool" aria-label="缩放"><svg><use href="#zoom"/></svg></button>
    <button class="tool" aria-label="控制盘"><svg><use href="#wheel"/></svg></button>
    <button class="tool" aria-label="运动"><svg><use href="#motion"/></svg></button>
    <i class="space"></i>
    <button class="ratio"><svg><use href="#anno"/></svg><span>1:1</span><i class="tri d"></i></button>
    <button class="tool" aria-label="注释可见性"><svg><use href="#annov"/></svg></button>
    <button class="tool dim" aria-label="自动缩放"><svg><use href="#anno"/></svg></button>
    <i class="sep"></i>
    <button class="gearbtn" aria-label="切换工作空间"><svg><use href="#gear"/></svg><i class="tri d"></i></button>
    <button class="tool" aria-label="锁定"><svg><use href="#lockgray"/></svg></button>
    <button class="menu-btn" aria-label="状态栏菜单"><i class="tri d"></i></button>
    <button class="tool" aria-label="全屏显示"><svg><use href="#screen"/></svg></button>
  </div>
</footer>

<div class="brand">
  <svg viewBox="35 65 140 185" aria-hidden="true">
    <path d="M48 84L64 92L90 96L79 106C74 120 76 132 88 140C104 149 124 148 140 154C156 161 161 176 158 190C155 203 158 222 157 244H145V214C139 207 134 201 132 190C114 196 96 194 80 188C77 205 74 222 72 244H58L63 225C63 205 60 192 51 180C38 162 36 147 45 133C54 121 58 114 55 106C48 103 51 96 48 84Z" fill="#dedee0"/>
    <path d="M76 94C94 102 114 101 132 100C150 97 158 84 171 76M84 96C73 87 76 80 82 75M96 98C86 87 90 77 96 72M108 99C98 88 102 78 107 72M107 85L115 74M126 99C116 94 117 85 123 80M121 91L131 84M140 98C137 92 140 87 146 83" fill="none" stroke="#dedee0" stroke-width="4"/>
  </svg>
  <div class="brand-text"><div class="brand-cn"><span class="brand-3d">3D</span><span>溜溜网</span></div><div class="brand-url">3D66.COM</div></div>
</div>
</body>
</html>
```
FILE: styles.css
```css
* { box-sizing: border-box; }
body {
  margin: 0;
  height: 100vh;
  display: flex;
  flex-direction: column;
  overflow: hidden;
  position: relative;
  background: #666;
  color: #222;
  font: 9px "Noto Sans", "Noto Sans CJK SC", sans-serif;
}
button { border: 0; padding: 0; margin: 0; background: none; font: inherit; color: inherit; }
p, h1 { margin: 0; }
i { display: block; flex: none; }
.sprite { display: none; }
.p { fill: #f3f3f3; stroke: #4b4f54; }
.s { fill: none; stroke: #44484c; }
.b { fill: #eaf2f8; stroke: #59636e; stroke-width: 1.2; }
.b2 { fill: #c9e8f7; stroke: #2e88be; stroke-width: 1.3; }
.c { fill: none; stroke: #2e88be; stroke-width: 1.5; }
.d { fill: #34383c; }
.w { fill: #e8e8e8; stroke: #eee; }

.tool { display: flex; align-items: center; justify-content: center; width: 17px; min-width: 0; }
.tool svg { width: 14px; height: 14px; flex: none; display: block; }
.dim { opacity: .5; }
.drop { width: 9px; display: flex; align-items: center; justify-content: center; }
.drop::after { content: ""; border: 2px solid transparent; border-top-color: #333; border-bottom: 0; }
.drop.big { width: 13px; }
.drop.big::after { border-width: 4px 3px 0; border-top-color: #111; }
.tri { width: 0; height: 0; border: 3px solid transparent; }
.tri.d { border-top-color: #222; border-bottom: 0; }
.tri.u { border-bottom-color: #222; border-top: 0; }
.tri.l { border-right-color: #444; border-left: 0; }
.tri.r { border-left-color: #444; border-right: 0; }

.header {
  display: grid;
  grid-template: 18px 15px / 26px 1fr;
  background: linear-gradient(#929292, #7c7c7c 50%, #555);
  flex: none;
}
.app-logo { grid-row: 1 / 3; height: 29px; border: 1px solid #4a4a4a; border-width: 0 1px 1px 0; background: linear-gradient(#a5a5a5, #777); }
.app-logo svg { display: block; width: 100%; height: 100%; }
.title-row, .menu-row { display: flex; min-width: 0; }
.quick { display: flex; width: 145px; padding: 0 1px 0 4px; border: 1px solid #484848; border-width: 0 1px 1px 0; background: linear-gradient(#999, #7a7a7a); }
.quick .tool { flex: 1; }
.title { flex: 1; display: flex; justify-content: center; gap: 12px; color: #e8e8e8; font-size: 9px; font-weight: 400; line-height: 18px; }
.search { display: flex; width: 240px; border: 1px solid #484848; border-top: 0; background: #747474; }
.search .drop { width: 6px; }
.expand { width: 10px; display: flex; align-items: center; justify-content: center; }
.expand::after { content: ""; border: 3px solid transparent; border-left: 4px solid #111; border-right: 0; }
.search input { flex: 1; min-width: 0; border: 0; padding: 0 1px; margin: 1px 0; background: #f2f2f2; font: italic 8px "Noto Sans CJK SC", sans-serif; }
.search input::placeholder { color: #666; }
.win { display: flex; padding-left: 12px; width: 47px; }
.win button { width: 12px; display: flex; align-items: center; justify-content: center; }
.win svg { width: 10px; height: 10px; }
.menu { flex: 1; display: flex; gap: 18px; padding-left: 11px; color: #eee; line-height: 14px; }

.bars { flex: none; display: flex; flex-direction: column; gap: 2px; padding-bottom: 2px; background: #646464; }
.bar-row { display: flex; height: 18px; padding-left: 4px; gap: 6px; }
.panel { display: flex; background: #efefef; border: 1px solid #d8d8d8; border-color: #fafafa #aaa #999 #fafafa; }
.standard { width: 484px; }
.standard .tool { flex: 1; }
.sep { width: 1px; margin: 1px 2px; background: #999; }
.grip { width: 3px; margin: 0 1px; border: 1px solid #999; border-width: 0 1px; background: #e8e8e8; }
.combo { position: relative; display: flex; align-items: center; background: linear-gradient(#fafafa, #dcdcdc); border-left: 1px solid #999; border-right: 1px solid #aaa; }
.combo::after { content: ""; position: absolute; right: 3px; top: 6px; border: 3px solid transparent; border-top: 4px solid #111; border-bottom: 0; pointer-events: none; }
.combo select { appearance: none; flex: 1; min-width: 0; height: 100%; border: 0; padding: 0; background: none; font: inherit; color: #222; opacity: 1; }
.lead { display: flex; align-items: center; flex: none; }
.style { width: 87px; padding-left: 12px; }
.style.flush { padding-left: 2px; }
.workspace { width: 126px; border-left: 0; }
.second { gap: 7px; }
.layer { width: 218px; }
.layer .lead { padding-left: 1px; }
.layer .lead svg { width: 12px; height: 12px; }
.layer select { padding-left: 1px; }
.propbar { font-family: "Liberation Serif", serif; font-weight: 700; font-size: 8px; }
.color { width: 107px; padding-left: 2px; border-left: 0; }
.color .lead svg { width: 10px; height: 10px; }
.stroke { height: 1px; background: #333; }
.ltype { width: 116px; padding-left: 2px; }
.ltype .stroke { width: 44px; margin-right: 4px; }
.lweight { width: 92px; padding-left: 2px; }
.lweight .stroke { width: 30px; margin-right: 3px; }
.plot { width: 87px; padding-left: 6px; background: #f0f0f0; font: 7px "Liberation Mono", monospace; }
.plot select { color: #777; }
.plot::after { border-top-color: #aaa; }

.work { flex: 1; min-height: 0; display: flex; }
.side { flex: none; overflow: hidden; padding-top: 1px; background: #686868; }
.side.left { width: 18px; padding-right: 3px; }
.side.right { width: 20px; padding-left: 3px; }
.handle { height: 6px; background: repeating-linear-gradient(#555 0 1px, #777 1px 3px); }
.strip + .handle { margin-top: 2px; }
.strip { display: flex; flex-direction: column; background: #efefef; border: 1px solid #ccc; border-width: 0 1px 1px 0; }
.strip .tool { height: 16px; }
.strip svg { width: 13px; height: 13px; }
.left .tool { width: 11px; }
.doc { flex: 1; min-width: 0; display: grid; grid-template: minmax(0, 1fr) 13px / minmax(0, 1fr) 14px; border: 2px solid #8a8a8a; border-right-width: 1px; border-bottom: 0; }
.canvas { background: #000; overflow: hidden; }
.drawing { display: block; width: 100%; }
.ucs { font: 300 14px Roboto, sans-serif; fill: #bbb; }
.vscroll { background: #efefef; display: flex; flex-direction: column; align-items: center; }
.arr { height: 12px; display: flex; align-items: center; }
.arr::after { content: ""; border: 3px solid transparent; }
.arr.up::after { border-bottom-color: #222; border-top: 0; }
.arr.down::after { border-top-color: #222; border-bottom: 0; }
.vscroll .thumb { width: 11px; height: 11px; border: 1px solid #aaa; background: linear-gradient(#fff, #ccc); margin: 181px 0 auto; }
.tabs { display: flex; background: #efefef; border-top: 1px solid #aaa; line-height: 11px; }
.tabnav { display: flex; }
.tabnav button { width: 10px; display: flex; align-items: center; justify-content: center; border-right: 1px solid #bbb; }
.tabnav .bar { width: 1px; height: 6px; background: #444; }
.tab { position: relative; padding: 0 6px; color: #222; }
.tab:not(.active)::after { content: ""; position: absolute; right: 0; top: 0; bottom: 0; width: 1px; background: #333; transform: skewX(-20deg); }
.tab.active { color: #fff; background: #000; padding: 0 7px; font-weight: 600; clip-path: polygon(0 0, 100% 0, calc(100% - 4px) 100%, 5px 100%); }
.hscroll { margin-left: auto; width: 34%; display: flex; align-items: center; gap: 6px; }
.hscroll .thumb { width: 4px; height: 10px; background: #fff; border: 1px solid #aaa; }
.corner { background: #e6e6e6; border-top: 1px solid #aaa; }

.command { flex: none; display: flex; border-top: 2px solid #606060; border-bottom: 1px solid #555; font: 11px/12px "Liberation Mono", "Noto Sans CJK SC", monospace; color: #222; }
.cmd-grip { width: 8px; background: #999; border-top: 4px double #777; }
.cmd-body { flex: 1; min-width: 0; background: #cce8cf; }
.history { display: flex; height: 29px; border-bottom: 1px solid #9aac9c; }
.log { flex: 1; min-width: 0; padding: 1px 0 0 2px; white-space: nowrap; overflow: hidden; }
.cmd-scroll { width: 10px; background: #efefef; display: flex; flex-direction: column; align-items: center; justify-content: space-between; padding: 4px 0 6px; }
.prompt { display: flex; height: 14px; padding-left: 2px; line-height: 15px; }
.prompt input { flex: 1; min-width: 0; border: 0; padding: 0; background: none; font: inherit; outline: 0; }
.cmd-h { width: 60px; background: #efefef; display: flex; align-items: center; justify-content: space-between; padding: 0 15px; }
.cmd-h .thumb { width: 10px; height: 10px; background: #ccc; border: 1px solid #999; }

.status { flex: none; height: 14px; display: flex; background: linear-gradient(#707070, #8c8c8c); }
.coords { width: 157px; padding-left: 6px; line-height: 17px; color: #979797; font-family: "Liberation Sans", sans-serif; }
.modes { display: flex; }
.modes .tool { width: 16px; background: linear-gradient(#aaa, #888); border-right: 1px solid #666; }
.modes .on { background: linear-gradient(#d3eef6, #8ec6d8); border-color: #5d8795; }
.modes svg { width: 12px; height: 12px; }
.tray { margin-left: auto; display: flex; background: #a9a9a9; }
.tray .tool, .ratio, .gearbtn { border-left: 1px solid #888; }
.tray .tool { width: 16px; }
.tray .tool svg { width: 13px; height: 13px; }
.word { padding: 0 1px; font-weight: 500; }
.space { width: 11px; background: #808080; }
.ratio, .gearbtn { display: flex; align-items: center; gap: 2px; padding: 0 3px; }
.ratio svg, .gearbtn svg { width: 12px; height: 12px; }
.menu-btn { width: 10px; display: flex; align-items: center; justify-content: center; }

.brand { position: absolute; right: 39px; bottom: 19px; width: 195px; height: 98px; padding: 14px 6px 14px 11px; display: flex; gap: 3px; background: #223055; color: #dedee0; }
.brand svg { width: 47px; height: 66px; flex: none; }
.brand-cn { display: flex; align-items: center; gap: 2px; height: 40px; font: 700 28px/34px "Noto Sans CJK SC", sans-serif; white-space: nowrap; }
.brand-3d { font: 34px/34px Roboto, sans-serif; }
.brand-url { font: 25px/28px "Liberation Sans", sans-serif; }
```
